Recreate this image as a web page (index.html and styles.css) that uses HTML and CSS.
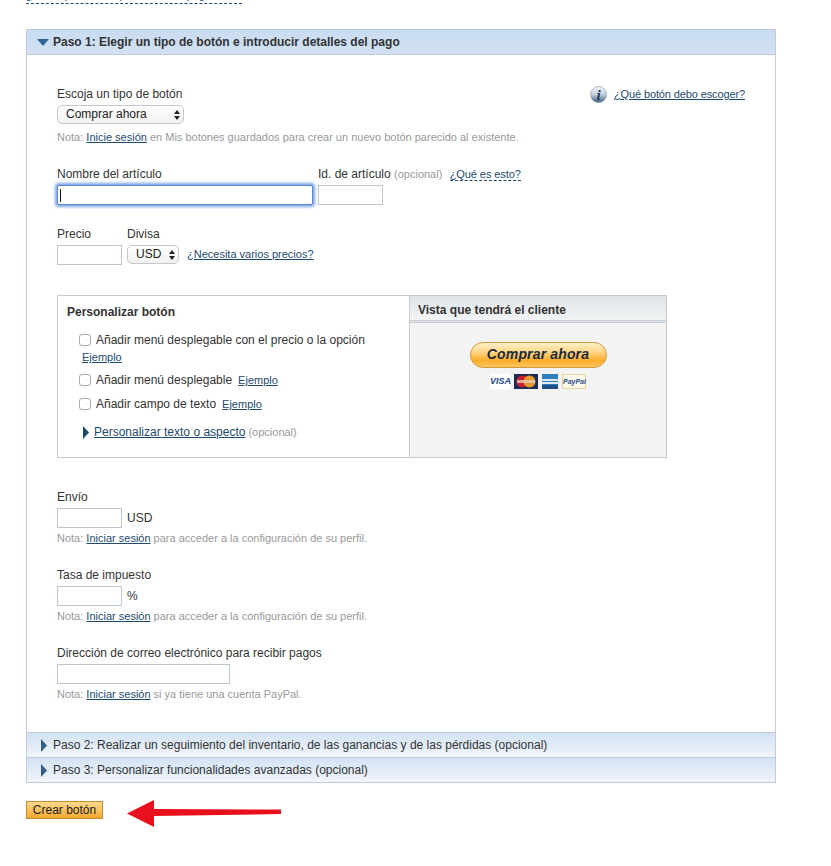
FILE: index.html

```html
<!DOCTYPE html>
<html lang="es">
<head>
<meta charset="UTF-8">
<meta name="viewport" content="width=device-width, initial-scale=1.0">
<title>Crear botón</title>
<link rel="stylesheet" href="styles.css">
</head>
<body>
<div class="top-clip"><span class="top-link">gestión para todos para el cobro página web</span></div>

<div class="panel">
  <div class="step step-open">
    <svg class="arrow-down" width="12" height="7" viewBox="0 0 12 7"><polygon points="0,0 12,0 6,7" fill="#2f6594"/></svg>
    <span>Paso 1: Elegir un tipo de botón e introducir detalles del pago</span>
  </div>

  <div class="panel-body">
    <div class="type-row">
      <div>
        <div class="label">Escoja un tipo de botón</div>
        <div class="select-wrap select-type">
          <select class="select"><option>Comprar ahora</option></select>
          <svg class="select-arrows" width="6" height="10" viewBox="0 0 6 10"><path d="M3 0L6 4H0ZM3 10L0 6H6Z" fill="#222"/></svg>
        </div>
      </div>
      <div class="help">
        <svg width="17" height="17" viewBox="0 0 17 17">
          <defs>
            <linearGradient id="infoFill" x1="0" y1="0" x2="0" y2="1">
              <stop offset="0" stop-color="#f4f6f8"/>
              <stop offset="0.5" stop-color="#c3cfdb"/>
              <stop offset="1" stop-color="#3f6184"/>
            </linearGradient>
          </defs>
          <circle cx="8.5" cy="8.5" r="8" fill="url(#infoFill)" stroke="#7d8fa1" stroke-width="0.6"/>
          <text x="8.5" y="13.5" text-anchor="middle" font-family="Liberation Serif" font-size="15" font-style="italic" font-weight="bold" fill="#1d3c5c">i</text>
        </svg>
        <a href="#" class="link link-help">¿Qué botón debo escoger?</a>
      </div>
    </div>
    <div class="note note-first">Nota: <a href="#" class="link">Inicie sesión</a> en Mis botones guardados para crear un nuevo botón parecido al existente.</div>

    <div class="item-row">
      <div>
        <div class="label">Nombre del artículo</div>
        <div class="input input-name"><span class="caret"></span></div>
      </div>
      <div>
        <div class="label">Id. de artículo <span class="optional">(opcional)</span> <a href="#" class="link link-dashed">¿Qué es esto?</a></div>
        <input class="input input-small" type="text">
      </div>
    </div>

    <div class="price-row">
      <div>
        <div class="label">Precio</div>
        <input class="input input-small" type="text">
      </div>
      <div>
        <div class="label">Divisa</div>
        <div class="currency">
          <div class="select-wrap select-usd">
            <select class="select"><option>USD</option></select>
            <svg class="select-arrows" width="6" height="10" viewBox="0 0 6 10"><path d="M3 0L6 4H0ZM3 10L0 6H6Z" fill="#222"/></svg>
          </div>
          <a href="#" class="link link-small link-prices">¿Necesita varios precios?</a>
        </div>
      </div>
    </div>

    <div class="custom-box">
      <div class="custom-left">
        <div class="box-title">Personalizar botón</div>
        <div class="check-row check-first"><input type="checkbox" class="check"><span>Añadir menú desplegable con el precio o la opción</span></div>
        <div class="example-line"><a href="#" class="link link-small">Ejemplo</a></div>
        <div class="check-row check-second"><input type="checkbox" class="check"><span>Añadir menú desplegable</span><a href="#" class="link link-small">Ejemplo</a></div>
        <div class="check-row check-third"><input type="checkbox" class="check"><span>Añadir campo de texto</span><a href="#" class="link link-small">Ejemplo</a></div>
        <div class="more-row">
          <svg width="6" height="13" viewBox="0 0 6 13"><polygon points="0,0 6,6.5 0,13" fill="#1d4a70"/></svg>
          <a href="#" class="link">Personalizar texto o aspecto</a>
          <span class="optional">(opcional)</span>
        </div>
      </div>
      <div class="custom-right">
        <div class="preview-head">Vista que tendrá el cliente</div>
        <div class="preview-body">
          <div class="buy-button">Comprar ahora</div>
          <div class="cards">
            <span class="card card-visa">VISA</span>
            <span class="card card-mc">
              <svg width="24" height="15" viewBox="0 0 24 15">
                <rect width="24" height="15" fill="#1e2a55"/>
                <circle cx="8.5" cy="7.5" r="6" fill="#c8202f"/>
                <circle cx="15.5" cy="7.5" r="6" fill="#e79a2c"/>
                <rect x="3" y="6" width="18" height="3" fill="#e8c9b0" opacity="0.8"/>
              </svg>
            </span>
            <span class="card card-amex">
              <svg width="16" height="15" viewBox="0 0 16 15">
                <rect width="16" height="15" fill="#2f7fbd"/>
                <rect y="5" width="16" height="2" fill="#dfeaf4"/>
                <rect y="8" width="16" height="2" fill="#dfeaf4"/>
                <rect y="11" width="16" height="4" fill="#1d4f86"/>
              </svg>
            </span>
            <span class="card card-paypal">PayPal</span>
          </div>
        </div>
      </div>
    </div>

    <div class="field field-ship">
      <div class="label">Envío</div>
      <div class="input-line"><input class="input input-small" type="text"><span>USD</span></div>
      <div class="note">Nota: <a href="#" class="link">Iniciar sesión</a> para acceder a la configuración de su perfil.</div>
    </div>

    <div class="field">
      <div class="label">Tasa de impuesto</div>
      <div class="input-line"><input class="input input-small" type="text"><span>%</span></div>
      <div class="note">Nota: <a href="#" class="link">Iniciar sesión</a> para acceder a la configuración de su perfil.</div>
    </div>

    <div class="field">
      <div class="label">Dirección de correo electrónico para recibir pagos</div>
      <input class="input input-email" type="text">
      <div class="note">Nota: <a href="#" class="link">Iniciar sesión</a> si ya tiene una cuenta PayPal.</div>
    </div>
  </div>

  <div class="step step-closed">
    <svg width="6" height="13" viewBox="0 0 6 13"><polygon points="0,0 6,6.5 0,13" fill="#2f5f8a"/></svg>
    <span>Paso 2: Realizar un seguimiento del inventario, de las ganancias y de las pérdidas (opcional)</span>
  </div>
  <div class="step step-closed">
    <svg width="6" height="13" viewBox="0 0 6 13"><polygon points="0,0 6,6.5 0,13" fill="#2f5f8a"/></svg>
    <span>Paso 3: Personalizar funcionalidades avanzadas (opcional)</span>
  </div>
</div>

<div class="actions">
  <button class="create-button">Crear botón</button>
  <svg class="red-arrow" width="155" height="28" viewBox="0 0 155 28">
    <polygon points="0,13.5 27,0 27,9 154,9.5 154,14 27,16 27,27" fill="#e8101c"/>
  </svg>
</div>
</body>
</html>
```

FILE: styles.css

```css
body {
  margin: 0;
  padding: 0 0 20px 26px;
  background-color: #fff;
  color: #333;
  font-family: "Liberation Sans", Arial, sans-serif;
  font-size: 12px;
  line-height: 14px;
}

/* bit of the previous line, cut off by the top of the page */
.top-clip {
  width: 216px;
  height: 3px;
  overflow: hidden;
  border-bottom: 1px dashed #1d4a8a;
  margin-bottom: 25px;
}

.top-link {
  display: block;
  margin-top: -12px;
  font-size: 11px;
  white-space: nowrap;
  color: #1d4a8a;
}

.panel {
  width: 748px;
  border: 1px solid #c3ccd6;
}

/* Step headers */
.step {
  display: flex;
  align-items: center;
  box-sizing: border-box;
  height: 25px;
  padding-left: 14px;
  gap: 6px;
}

.step-open {
  padding-left: 10px;
  gap: 4px;
  font-weight: bold;
  background: linear-gradient(#c9dcf1, #d2e1f3);
  border-bottom: 1px solid #bccbdb;
}

.step-closed {
  background: linear-gradient(#d3e2f3, #f1f5fa);
  border-top: 1px solid #c3ccd6;
}

.panel-body {
  padding: 32px 30px 31px 30px;
}

.label {
  margin-bottom: 4px;
}

.type-row {
  display: flex;
  justify-content: space-between;
}

.help {
  display: flex;
  align-items: flex-start;
  gap: 7px;
  font-size: 11px;
}

.help svg {
  margin-top: -1px;
}

.link {
  color: #1c4a70;
  text-decoration: underline;
}

.link-small {
  font-size: 11px;
}

.link-help {
  letter-spacing: -0.12px;
}

.link-prices {
  margin-top: -2px;
}

.link-dashed {
  margin-left: 4px;
  font-size: 11px;
  letter-spacing: -0.08px;
  text-decoration: none;
  border-bottom: 1px dashed #1c4a70;
}

.optional {
  color: #999;
  font-size: 11px;
}

.note {
  margin-top: 3px;
  color: #999;
  font-size: 11px;
}

.note-first {
  margin-top: 6px;
}

/* Form controls */
.select-wrap {
  position: relative;
  height: 19px;
}

.select {
  appearance: none;
  display: block;
  width: 100%;
  height: 19px;
  padding: 0 0 2px 8px;
  border: 1px solid #c4c8cc;
  border-radius: 5px;
  background: linear-gradient(#fff, #f1f1f1);
  color: #222;
  font-family: "Liberation Sans", Arial, sans-serif;
  font-size: 12px;
}

.select-arrows {
  position: absolute;
  top: 5px;
  right: 4px;
}

.select-type {
  width: 127px;
}

.select-usd {
  width: 52px;
}

.input {
  display: block;
  box-sizing: border-box;
  height: 20px;
  margin: 0;
  padding: 0 2px;
  border: 1px solid #bcc7d2;
  background-color: #fff;
}

.input-small {
  width: 65px;
}

.input-email {
  width: 173px;
}

.input-name {
  width: 256px;
  padding-top: 3px;
  border: 1px solid #5b85d0;
  border-radius: 2px;
  box-shadow: 0 0 3px 2px #7ea6e6;
}

.caret {
  display: block;
  width: 1px;
  height: 13px;
  background-color: #111;
}

.item-row {
  display: flex;
  gap: 5px;
  margin-top: 23px;
}

.price-row {
  display: flex;
  gap: 5px;
  margin-top: 22px;
}

.currency {
  display: flex;
  align-items: center;
  gap: 8px;
  height: 19px;
}

/* Personalizar boton box */
.custom-box {
  display: flex;
  width: 610px;
  height: 163px;
  box-sizing: border-box;
  margin-top: 30px;
  border: 1px solid #c9c9c9;
}

.custom-left {
  width: 352px;
  box-sizing: border-box;
  padding: 9px 0 0 9px;
  border-right: 1px solid #c9c9c9;
}

.box-title {
  font-weight: bold;
}

.check-row {
  display: flex;
  align-items: center;
  padding-left: 12px;
  gap: 5px;
}

.check-row .link {
  margin-left: 1px;
}

.check {
  appearance: none;
  width: 12px;
  height: 12px;
  margin: 0;
  border: 1px solid #a9a9a9;
  border-radius: 3px;
  background-color: #fff;
}

.check-first {
  margin-top: 14px;
}

.check-second {
  margin-top: 9px;
}

.check-third {
  margin-top: 10px;
}

.example-line {
  margin-top: 3px;
  padding-left: 15px;
}

.more-row {
  display: flex;
  align-items: center;
  gap: 5px;
  margin-top: 14px;
  padding-left: 16px;
}

.more-row .optional {
  margin-left: -2px;
}

.custom-right {
  flex: 1;
  display: flex;
  flex-direction: column;
  background-color: #f3f3f3;
}

.preview-head {
  height: 27px;
  box-sizing: border-box;
  padding: 7px 0 0 8px;
  font-weight: bold;
  background: linear-gradient(#dfe4e8, #f2f4f5);
  border-bottom: 3px double #c9cfd4;
}

.preview-body {
  display: flex;
  flex-direction: column;
  align-items: center;
  padding-top: 19px;
}

.buy-button {
  width: 137px;
  height: 26px;
  box-sizing: border-box;
  border: 1px solid #d29a3c;
  border-radius: 13px;
  background: linear-gradient(#fff0c8 0%, #ffd98c 35%, #f9ad2c 72%, #fdc55e 100%);
  color: #1b2a3a;
  font-size: 14px;
  font-weight: bold;
  font-style: italic;
  letter-spacing: 0.15px;
  line-height: 23px;
  text-align: center;
}

.cards {
  display: flex;
  align-items: center;
  gap: 4px;
  margin-top: 6px;
  height: 15px;
}

.card {
  display: block;
  height: 15px;
}

.card-visa {
  width: 20px;
  background-color: #fff;
  color: #1c4a85;
  font-size: 9px;
  font-weight: bold;
  font-style: italic;
  line-height: 15px;
  text-align: center;
}

.card-mc {
  width: 24px;
}

.card-amex {
  width: 16px;
}

.card-paypal {
  width: 24px;
  box-sizing: border-box;
  border: 1px solid #e8d2a0;
  background-color: #fdf8ea;
  color: #2b4f8c;
  font-size: 7px;
  font-weight: bold;
  font-style: italic;
  line-height: 13px;
  text-align: center;
}

/* Lower fields */
.field {
  margin-top: 23px;
}

.field-ship {
  margin-top: 32px;
}

.input-line {
  display: flex;
  align-items: center;
  gap: 5px;
}

/* Bottom */
.actions {
  display: flex;
  align-items: flex-start;
  gap: 24px;
  margin-top: 18px;
}

.create-button {
  width: 77px;
  height: 18px;
  padding: 0;
  border: 1px solid #c78a2c;
  background: linear-gradient(#fbd98f, #f6a92e);
  color: #222;
  font-family: "Liberation Sans", Arial, sans-serif;
  font-size: 12px;
}

.red-arrow {
  margin-top: -1px;
}
```
